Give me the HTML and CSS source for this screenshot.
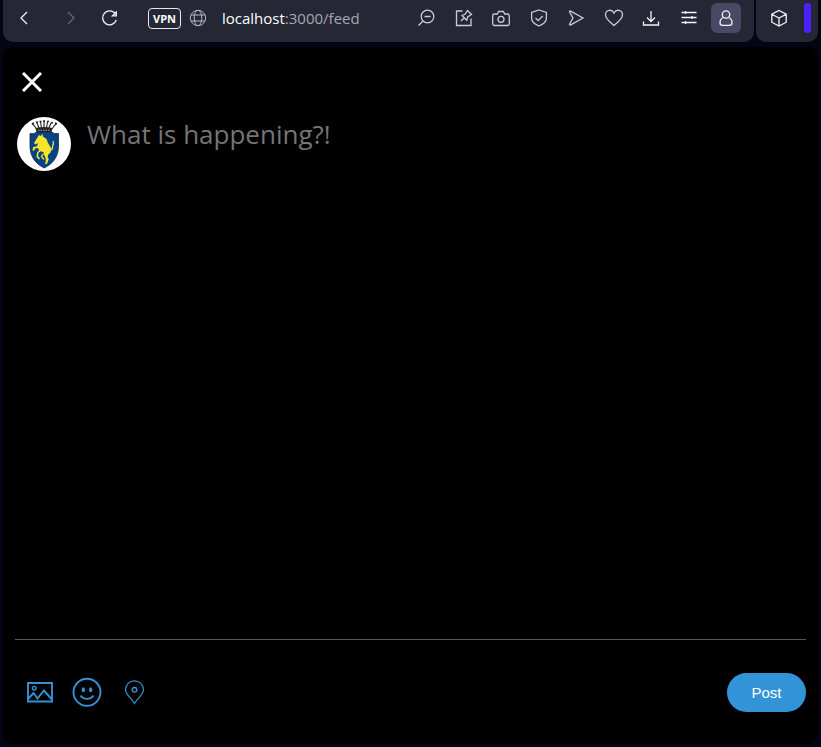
FILE: index.html
```html
<!DOCTYPE html>
<html lang="en">
<head>
<meta charset="utf-8">
<meta name="viewport" content="width=device-width, initial-scale=1">
<title>Compose post</title>
<link rel="stylesheet" href="styles.css">
</head>
<body>
<header class="browser">
  <div class="toolbar">
    <nav class="history" aria-label="History">
      <button class="tool bright" type="button" aria-label="Back"><svg viewBox="0 0 30 30"><path d="M18 9l-6 6 6 6"/></svg></button>
      <button class="tool dim" type="button" aria-label="Forward"><svg viewBox="0 0 30 30"><path d="M12 9l6 6-6 6"/></svg></button>
      <button class="tool bright reload" type="button" aria-label="Reload"><svg viewBox="0 0 30 30"><path d="M20.600 11.200A7 7 0 1 0 21.300 17M21.300 9v3.800h-3.800z"/></svg></button>
    </nav>
    <div class="address">
      <button class="vpn" type="button">VPN</button>
      <svg class="globe" viewBox="0 0 18 18" aria-hidden="true"><circle cx="9" cy="9" r="7.700"/><ellipse cx="9" cy="9" rx="3.800" ry="7.700"/><path d="M2.200 6h13.600M2.200 12h13.600"/></svg>
      <span class="url"><span class="host">localhost</span>:3000/feed</span>
    </div>
    <div class="actions">
      <button class="tool" type="button" aria-label="Zoom out"><svg viewBox="0 0 30 30"><circle cx="16.500" cy="13.500" r="6.300"/><path d="M13.500 13.500h6M12 18l-4.500 4.500"/></svg></button>
      <button class="tool" type="button" aria-label="Pin"><svg viewBox="0 0 30 30"><path d="M13.500 8H7.500v14.500h14.500v-7M12 18l3.500-3.500M13 12.500l4.700 4.700 1-3.200 3.800-2.500-4-4-2.500 3.800z"/></svg></button>
      <button class="tool" type="button" aria-label="Snapshot"><svg viewBox="0 0 30 30"><path d="M8.500 11h2.700l1.500-2.500h4.600l1.500 2.500h2.700q1.800 0 1.800 1.800v7.900q0 1.800-1.800 1.800h-13q-1.800 0-1.800-1.800v-7.900q0-1.800 1.800-1.800z"/><circle cx="15" cy="16.300" r="3"/></svg></button>
      <button class="tool" type="button" aria-label="Ad blocker"><svg viewBox="0 0 30 30"><path d="M15 7l7.400 2.500v5.500q0 5-7.400 8-7.400-3-7.400-8V9.500zM11.500 15l2.700 2.600 4.500-4.600"/></svg></button>
      <button class="tool" type="button" aria-label="Flow"><svg viewBox="0 0 30 30"><path d="M8.700 9.200q-.7-1.700 1-1L22 15l-12.300 6.800q-1.700.7-1-1L12 15z"/></svg></button>
      <button class="tool" type="button" aria-label="Bookmark"><svg viewBox="0 0 30 30"><path d="M15 22.500C11 19.200 6.500 16 6.500 11.800C6.500 7 12.700 5.500 15 10c2.300-4.500 8.500-3 8.500 1.800C23.500 16 19 19.200 15 22.500z"/></svg></button>
      <button class="tool bright" type="button" aria-label="Downloads"><svg viewBox="0 0 30 30"><path d="M15 8v10.500M11 14.500l4 4 4-4M7.500 18.500V22h15v-3.500"/></svg></button>
      <button class="tool bright" type="button" aria-label="Easy setup"><svg viewBox="0 0 30 30"><path d="M7.500 9.500h15M7.500 14.500h15M7.500 19.500h15M11.500 8v3M18 13v3M11.500 18v3"/></svg></button>
      <button class="tool bright profile" type="button" aria-label="Profile"><svg viewBox="0 0 30 30"><circle cx="15" cy="11.500" r="3.700"/><path d="M12.300 14.500c-2 .8-3.300 2.800-3.300 5.200 0 1.700 1 2.600 2.600 2.600h6.800c1.600 0 2.600-.9 2.600-2.600 0-2.400-1.300-4.400-3.300-5.200"/></svg></button>
    </div>
  </div>
  <div class="extras">
    <button class="tool bright" type="button" aria-label="Extensions"><svg viewBox="0 0 30 30"><path d="M15 7.500l7.200 3.700v8L15 23l-7.200-3.800v-8zM7.800 11.200L15 15l7.200-3.800M15 15v8"/></svg></button>
    <span class="marker"></span>
  </div>
</header>
<main class="page">
  <form class="composer">
    <button class="close" type="button" aria-label="Close"><svg viewBox="0 0 20 20"><path d="M1 1l18 18M19 1L1 19"/></svg></button>
    <div class="entry">
      <svg class="avatar" viewBox="0 0 54 54" role="img" aria-label="Profile picture">
        <circle cx="27" cy="27" r="27" fill="#fff"/>
        <path d="M19.500 12l-2-3-2-2M22 11l-2-5M24.500 11l-1-6M27 11V4M29.500 11l1-6M32 11l2-5M35 12l2-3 2-2" stroke="#222" stroke-width="1.100" fill="none"/>
        <path d="M15 7l2-1M19 5.500l2-.5M22.500 4.500h2M26 4h2M30 4.500h2M34 5.500l2 .5M38 6l2 1" stroke="#222" stroke-width="1.600"/>
        <path d="M18.500 11q8.500-2 17 0l-1 4.500h-15z" fill="#252525"/>
        <path d="M21 13.300h12" stroke="#a9a178" stroke-width="1" stroke-dasharray="1.500 1"/>
        <path d="M13 16.500q4 1 7-1.500h14.500q3 2.500 7 1.500v12.500c0 11-6 18-14.300 22C19 47 13 40 13 29z" fill="#064386" stroke="#142447" stroke-width=".8"/>
        <path d="M22 18l1.500 1 2-2 .5 2.500 3.500 2.500 1.500 4 3 5-.2 4-2.800 3-.3 2.500 1 1.500-1.500 4.500-2.500.8 1-2.500v-3.500l-1.500-3-.5-3-3-1-2.200 1.500-.3 3.500 2 2.500-1.200.6-2.500-2.500.5-4.500 2-2-1-2.500-3 .5-1 2.500-1.400-.5.4-3.400 4-.8 1-3.200-2.500 1.500-1.500-1.500z" fill="#f7e52b"/>
        <path d="M33.500 33c4-1 .5-4 3-6l-.5-3M26.500 36.500l-2 3 2.500 3" fill="none" stroke="#f7e52b" stroke-width="1.300"/>
      </svg>
      <textarea class="message" rows="1" aria-label="Post text" placeholder="What is happening?!"></textarea>
    </div>
    <footer class="footer">
      <div class="attachments">
        <button class="attach" type="button" aria-label="Add image"><svg viewBox="0 0 32 32"><path d="M4 7h24v18.500H4zM4.500 22.500l5-5.500 4 5.500 6.500-8 7.500 8.500" stroke-width="1.900"/><circle cx="10.200" cy="12.200" r="1.800" stroke-width="1.400"/></svg></button>
        <button class="attach" type="button" aria-label="Add emoji"><svg viewBox="0 0 32 32"><circle cx="16" cy="16.300" r="13.500" stroke-width="1.900"/><path d="M9.500 19.500c3 4.500 10 4.500 13 0" stroke-width="1.900"/><ellipse cx="12.300" cy="13.700" rx="1.700" ry="2.500" class="eye"/><ellipse cx="19.700" cy="13.700" rx="1.700" ry="2.500" class="eye"/></svg></button>
        <button class="attach" type="button" aria-label="Add location"><svg viewBox="0 0 32 32"><path d="M16.500 27.500C14 23 7.500 18.500 7.500 13.800a9 9 0 0 1 18 0C25.500 18.500 19 23 16.500 27.500z" stroke-width="1.200"/><circle cx="16.500" cy="13.800" r="2.300" stroke-width="1.400"/></svg></button>
      </div>
      <button class="post" type="submit">Post</button>
    </footer>
  </form>
</main>
</body>
</html>
```
FILE: styles.css
```css
* { box-sizing: border-box; }

body {
  display: flex;
  flex-direction: column;
  gap: 5px;
  min-height: 100vh;
  margin: 0;
  padding: 0 3px 3px;
  background: #030513;
  font-family: "Liberation Sans", Arial, sans-serif;
}

button {
  margin: 0;
  padding: 0;
  border: 0;
  background: none;
  color: inherit;
  font: inherit;
  cursor: pointer;
}

svg {
  display: block;
  fill: none;
  stroke: currentColor;
}

/* Browser bar */
.browser { display: flex; gap: 2px; }

.toolbar,
.extras {
  display: flex;
  align-items: center;
  padding: 3px 13px 9px 6px;
  border-radius: 0 0 10px 10px;
  background: #252834;
}

.toolbar { flex: 1; min-width: 0; }

.extras {
  gap: 10px;
  padding: 3px 7px 9px 8px;
}

.tool {
  flex: none;
  width: 30px;
  height: 30px;
  color: #c9ccd8;
}

.tool svg { stroke-width: 1.3; }
.bright { color: #f2f3f8; }
.dim { color: #656875; }

.profile {
  border-radius: 6px;
  background: #4a4965;
}

.marker {
  width: 7px;
  height: 30px;
  border-radius: 3px;
  background: #4d20fb;
}

.history { display: flex; gap: 9px; }
.history .dim { margin-left: 8px; }

.address {
  display: flex;
  flex: 1;
  align-items: center;
  min-width: 0;
  margin-left: 23px;
}

.vpn {
  width: 33px;
  height: 21px;
  border: 1px solid #e6e8f0;
  border-radius: 4px;
  color: #ffffff;
  font: bold 11px/19px "Open Sans", sans-serif;
}

.globe {
  flex: none;
  width: 18px;
  height: 18px;
  margin: 0 15px 0 8px;
  color: #b5b8c4;
}

.url {
  overflow: hidden;
  color: #a3a7b5;
  font: 15px/24px "Open Sans", sans-serif;
  white-space: nowrap;
}

.host { color: #ffffff; }

.actions {
  display: flex;
  flex: 0 0 330px;
  justify-content: space-between;
}

/* Composer */
.page {
  display: flex;
  flex: 1;
  border-radius: 10px;
  background: #000000;
}

.composer {
  display: flex;
  flex: 1;
  flex-direction: column;
  min-width: 0;
  padding: 20px 12px 0;
}

.close {
  align-self: flex-start;
  width: 30px;
  height: 30px;
  margin-left: 2px;
  padding: 5px;
  color: #ffffff;
}

.close svg { stroke-width: 3; }

.entry {
  display: flex;
  flex: 1;
  gap: 16px;
  margin-top: 20px;
  padding-left: 2px;
}

.avatar {
  flex: none;
  width: 54px;
  height: 54px;
  stroke: none;
}

.message {
  flex: 1;
  min-width: 0;
  padding: 0;
  border: 0;
  outline: 0;
  background: none;
  color: #ffffff;
  font: 26px/34px "Open Sans", sans-serif;
  resize: none;
}

.message::placeholder { color: #757575; opacity: 1; }

.footer {
  display: flex;
  align-items: center;
  justify-content: space-between;
  height: 105px;
  border-top: 1px solid #56585b;
}

.attachments { display: flex; gap: 15px; padding-left: 9px; }

.attach {
  width: 32px;
  height: 32px;
  color: #3492d5;
}

.eye { fill: currentColor; stroke: none; }

.post {
  width: 79px;
  height: 39px;
  border-radius: 20px;
  background: #3294d7;
  color: #ffffff;
  font-size: 15px;
}
```
